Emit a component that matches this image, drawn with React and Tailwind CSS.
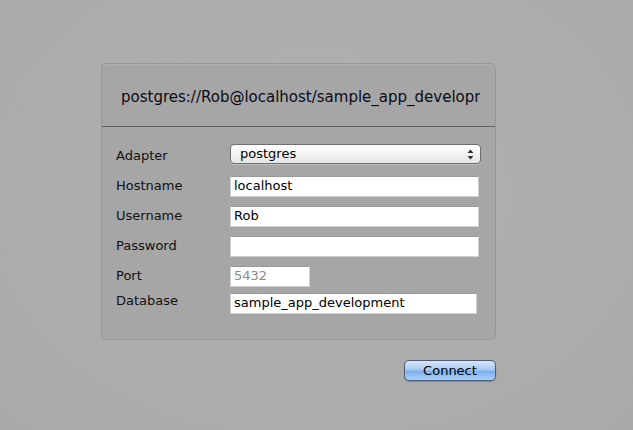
const font = { fontFamily: '"DejaVu Sans", "Liberation Sans", sans-serif' };

const Field = ({ label, value, width = 'w-[249px]', muted }) => (
  <div className="flex items-center h-[30px]">
    <span className="w-[114px] text-[13px] text-[#111]">{label}</span>
    <div
      className={`${width} h-[21px] bg-white border border-[#cfcfcf] border-t-[#9a9a9a] flex items-center px-[3px] text-[13px] ${
        muted ? 'text-[#8a8a8a]' : 'text-black'
      }`}
    >
      {value}
    </div>
  </div>
);

export default function App() {
  return (
    <div
      className="w-[633px] h-[430px] overflow-hidden bg-[radial-gradient(ellipse_at_50%_45%,#b3b3b3_0%,#adadad_55%,#a9a9a9_100%)] pt-[63px]"
      style={font}
    >
      <div className="ml-[101px] w-[395px] h-[277px] rounded-[5px] border border-[#989898] bg-[#a6a6a6] shadow-[inset_0_1px_0_rgba(255,255,255,0.08)]">
        <div className="h-[63px] border-b border-[#5f5f5f] flex items-center pt-[5px] pl-[19px] pr-[15px] overflow-hidden">
          <span className="text-[15px] text-[#0b0b14] whitespace-nowrap overflow-hidden w-[360px]">
            postgres://Rob@localhost/sample_app_development
          </span>
        </div>
        <div className="pl-[14px] pt-[15px]">
          <div className="flex items-center h-[24px] mb-[5px]">
            <span className="w-[114px] text-[13px] text-[#111] pt-[3px]">Adapter</span>
            <div className="w-[251px] h-[20px] rounded-[4px] border border-[#6e6e6e] bg-[linear-gradient(#ffffff,#f3f3f3_50%,#e6e6e6)] shadow-[0_1px_0_rgba(255,255,255,0.3)] flex items-center pl-[9px] pr-[6px] text-[13px] text-black">
              <span className="flex-1">postgres</span>
              <svg width="7" height="11" viewBox="0 0 7 11">
                <path d="M3.5 0.5 L6.5 4 H0.5 Z" fill="#333" />
                <path d="M3.5 10.5 L6.5 7 H0.5 Z" fill="#333" />
              </svg>
            </div>
          </div>
          <Field label="Hostname" value="localhost" />
          <Field label="Username" value="Rob" />
          <Field label="Password" value="" />
          <Field label="Port" value="5432" width="w-[80px]" muted />
          <div className="flex items-center h-[28px] -mt-[2px]">
            <span className="w-[114px] text-[13px] text-[#111] -mt-[4px]">Database</span>
            <div className="w-[247px] h-[21px] bg-white border border-[#cfcfcf] border-t-[#9a9a9a] flex items-center px-[3px] text-[13px] text-black">
              sample_app_development
            </div>
          </div>
        </div>
      </div>
      <div className="flex justify-end w-[496px] mt-[20px]">
        <button className="w-[92px] h-[21px] rounded-[5px] border border-[#4e5a78] bg-[linear-gradient(#d6e6fb,#a9caf4_45%,#7fb0ee_55%,#a8d0fb)] text-[13px] text-black leading-none shadow-[0_1px_1px_rgba(0,0,0,0.2)]">
          Connect
        </button>
      </div>
    </div>
  );
}
